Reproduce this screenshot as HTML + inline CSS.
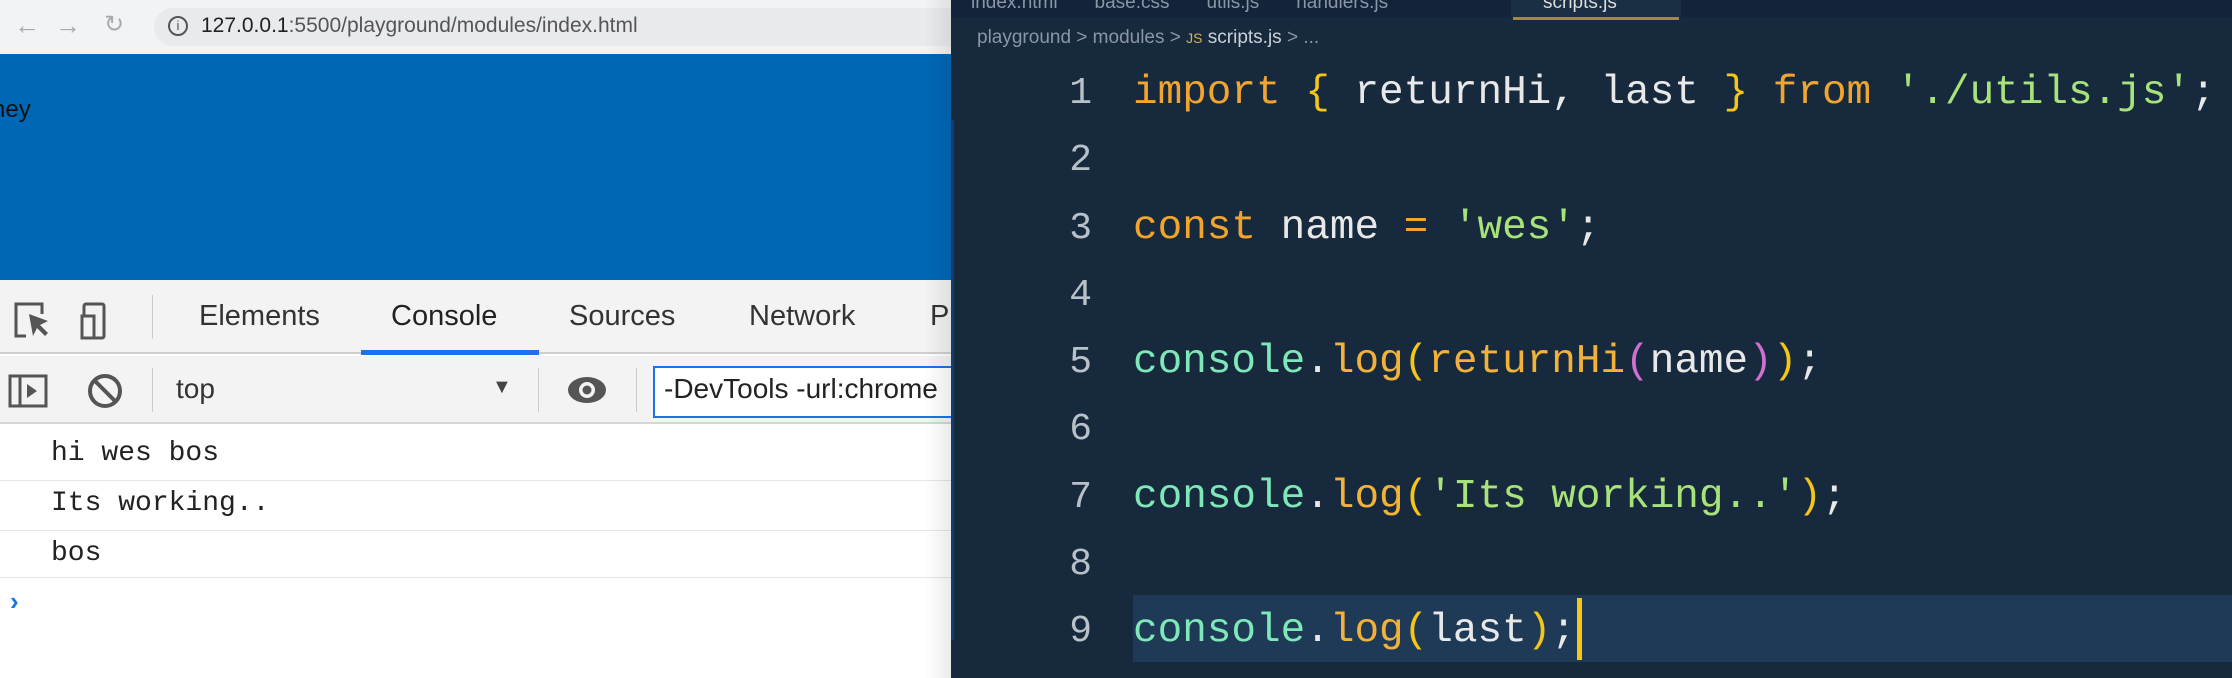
<!DOCTYPE html>
<html><head><meta charset="utf-8"><style>
*{margin:0;padding:0;box-sizing:border-box}
body{width:2232px;height:678px;overflow:hidden;position:relative;background:#fff;font-family:"Liberation Sans",sans-serif}
.abs{position:absolute}
#left{left:0;top:0;width:951px;height:678px;background:#fff;overflow:hidden}
#addr{left:0;top:0;width:951px;height:54px;background:#f1f3f4}
#url{left:154px;top:8px;width:820px;height:38px;background:#e8eaed;border-radius:19px}
#blue{left:0;top:54px;width:951px;height:226px;background:#0067b5}
#tabs{left:0;top:280px;width:951px;height:74px;background:#f3f3f3;border-bottom:2px solid #cfcfcf}
.tab{position:absolute;top:300px;font-size:29px;color:#333}
#tb{left:0;top:356px;width:951px;height:68px;background:#f3f3f3;border-bottom:2px solid #d6d6d6}
.msg{position:absolute;left:51px;font-family:"Liberation Mono",monospace;font-size:28px;color:#222}
.sep{position:absolute;left:0;width:951px;height:1px;background:#e6e6e6}
#ed{left:951px;top:0;width:1281px;height:678px;background:#172a3d}
#code{position:absolute;left:0;top:60px;font-family:"Liberation Mono",monospace;font-size:41px;line-height:67.3px;white-space:pre;color:#e8e8e8}
.ln{position:absolute;left:1040px;width:52px;text-align:right;color:#b8c0c8;font-family:"Liberation Mono",monospace;font-size:38px;line-height:67.3px}
.k{color:#f2a52e}.s{color:#a8e27a}.c{color:#7fe8b8}.y{color:#f5c518}.p{color:#d070d0}.f{color:#f2b23a}
</style></head><body>
<div id="left" class="abs">
 <div id="addr" class="abs"></div>
 <div class="abs" style="left:14px;top:10px;font-size:26px;color:#aaa">←</div>
 <div class="abs" style="left:55px;top:10px;font-size:26px;color:#aaa">→</div>
 <div class="abs" style="left:104px;top:10px;font-size:24px;color:#aaa">↻</div>
 <div id="url" class="abs"></div>
 <div class="abs" style="left:168px;top:16px;width:20px;height:20px;border:2px solid #555;border-radius:50%;font-size:13px;text-align:center;line-height:16px;color:#555">i</div>
 <div class="abs" style="left:201px;top:14px;font-size:21px;color:#222">127.0.0.1<span style="color:#555">:5500/playground/modules/index.html</span></div>
 <div id="blue" class="abs"></div>
 <div class="abs" style="left:-8px;top:96px;font-size:24px;color:#111">hey</div>
 <div id="tabs" class="abs"></div>
 <svg class="abs" style="left:12px;top:300px" width="120" height="44"><path d="M14 36H4V4h26v10" fill="none" stroke="#555" stroke-width="3"/><path d="M17 14l4 22 4-8 8 8 3-3-8-8 8-4z" fill="#555"/><rect x="72" y="4" width="20" height="34" rx="2" fill="none" stroke="#555" stroke-width="3"/><rect x="70" y="16" width="12" height="22" fill="#f3f3f3" stroke="#555" stroke-width="3"/></svg>
 <div class="abs" style="left:152px;top:295px;width:1px;height:44px;background:#ccc"></div>
 <div class="tab" style="left:199px;color:#333">Elements</div>
 <div class="tab" style="left:391px;color:#222">Console</div>
 <div class="tab" style="left:569px">Sources</div>
 <div class="tab" style="left:749px">Network</div>
 <div class="tab" style="left:930px">P</div>
 <div class="abs" style="left:361px;top:350px;width:178px;height:5px;background:#1a73e8"></div>
 <div id="tb" class="abs"></div>
 <svg class="abs" style="left:8px;top:372px" width="130" height="40"><rect x="2" y="4" width="36" height="30" fill="none" stroke="#555" stroke-width="3"/><line x1="12" y1="4" x2="12" y2="34" stroke="#555" stroke-width="3"/><path d="M19 12v14l10-7z" fill="#555"/><circle cx="97" cy="19" r="15" fill="none" stroke="#555" stroke-width="4"/><line x1="87" y1="9" x2="107" y2="29" stroke="#555" stroke-width="4"/></svg>
 <div class="abs" style="left:152px;top:368px;width:1px;height:44px;background:#ccc"></div>
 <div class="abs" style="left:176px;top:373px;font-size:28px;color:#333">top</div>
 <div class="abs" style="left:492px;top:376px;font-size:20px;color:#444">▼</div>
 <div class="abs" style="left:538px;top:368px;width:1px;height:44px;background:#ccc"></div>
 <svg class="abs" style="left:566px;top:374px" width="42" height="32"><ellipse cx="21" cy="16" rx="19" ry="13" fill="#555"/><circle cx="21" cy="16" r="8" fill="#f3f3f3"/><circle cx="21" cy="16" r="4.5" fill="#555"/></svg>
 <div class="abs" style="left:636px;top:368px;width:1px;height:44px;background:#ccc"></div>
 <div class="abs" style="left:653px;top:366px;width:310px;height:52px;border:2px solid #1a73e8;background:#fff"></div>
 <div class="abs" style="left:664px;top:373px;font-size:28px;color:#222;white-space:nowrap">-DevTools -url:chrome</div>
 <div class="msg" style="top:438px">hi wes bos</div>
 <div class="sep" style="top:480px"></div>
 <div class="msg" style="top:488px">Its working..</div>
 <div class="sep" style="top:530px"></div>
 <div class="msg" style="top:538px">bos</div>
 <div class="sep" style="top:577px"></div>
 <div class="abs" style="left:10px;top:586px;font-size:26px;color:#1a73e8;font-weight:bold">›</div>
 <div class="abs" style="left:925px;top:0;width:26px;height:678px;background:linear-gradient(to right,rgba(0,0,0,0),rgba(0,0,0,0.08))"></div>
</div>
<div id="ed" class="abs">
 <div class="abs" style="left:0;top:0;width:1281px;height:17px;background:#13243a"></div>
 <div class="abs" style="left:20px;top:-8px;font-size:19px;color:#8a96a6;white-space:nowrap">index.html &nbsp;&nbsp;&nbsp;&nbsp;&nbsp; base.css &nbsp;&nbsp;&nbsp;&nbsp;&nbsp; utils.js &nbsp;&nbsp;&nbsp;&nbsp;&nbsp; handlers.js</div>
 <div class="abs" style="left:560px;top:0;width:170px;height:17px;background:#1a2e44"></div>
 <div class="abs" style="left:592px;top:-8px;font-size:19px;color:#ddd">scripts.js</div>
 <div class="abs" style="left:562px;top:17px;width:166px;height:3px;background:#a08a40"></div>
 <div class="abs" style="left:26px;top:27px;font-size:19px;color:#8a96a6;white-space:nowrap">playground &gt; modules &gt; <span style="color:#d4b44a;font-size:14px">JS</span> <span style="color:#c8d0d8">scripts.js</span> &gt; ...</div>
 <div class="abs" style="left:182px;top:595px;width:1099px;height:67px;background:#1e3a56"></div>
 <div class="abs" style="left:0;top:120px;width:3px;height:520px;background:#0d3e6e"></div>
</div>
<div class="ln" style="top:60px">1<br>2<br>3<br>4<br>5<br>6<br>7<br>8<br>9</div>
<div class="abs" style="left:1133px;top:0;width:1099px;height:678px">
<div id="code"><span class="k">import</span> <span class="y">{</span> returnHi, last <span class="y">}</span> <span class="k">from</span> <span class="s">'./utils.js'</span>;

<span class="k">const</span> name <span class="k">=</span> <span class="s">'wes'</span>;

<span class="c">console</span>.<span class="f">log</span><span class="y">(</span><span class="f">returnHi</span><span class="p">(</span>name<span class="p">)</span><span class="y">)</span>;

<span class="c">console</span>.<span class="f">log</span><span class="y">(</span><span class="s">'Its working..'</span><span class="y">)</span>;

<span class="c">console</span>.<span class="f">log</span><span class="y">(</span>last<span class="y">)</span>;</div>
</div>
<div class="abs" style="left:1577px;top:598px;width:5px;height:62px;background:#f5c518"></div>
</body></html>
